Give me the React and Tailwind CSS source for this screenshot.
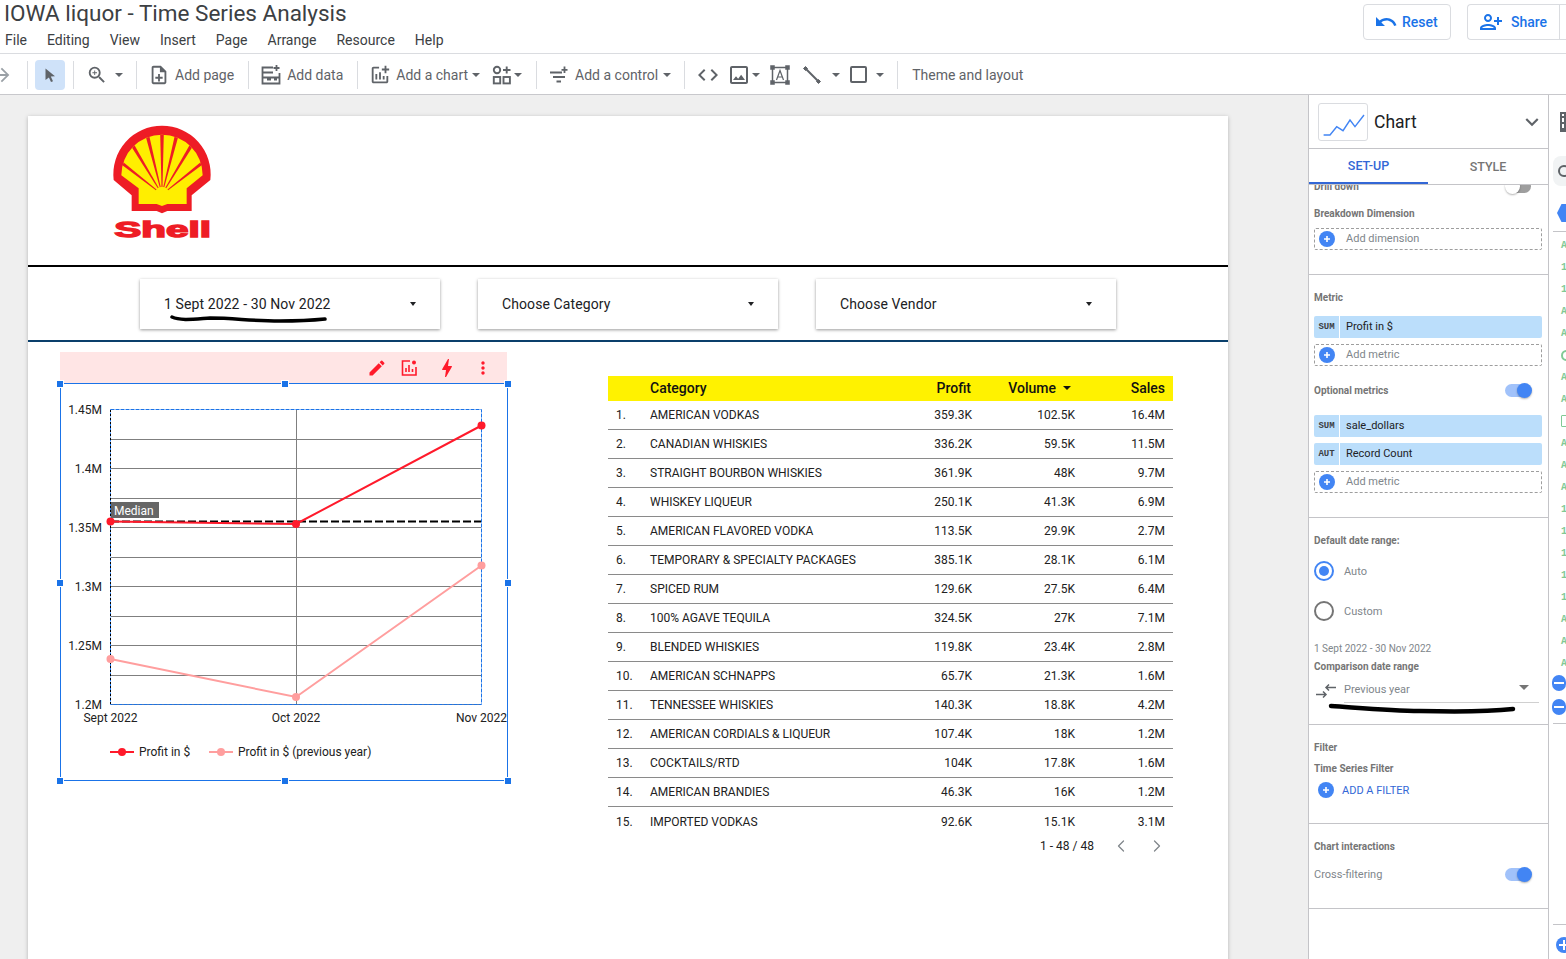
import { MdEdit, MdBolt, MdMoreVert, MdUndo, MdOutlinePersonAddAlt1, MdKeyboardArrowDown, MdZoomIn, MdOutlineNoteAdd, MdOutlineAddchart, MdOutlineImage, MdCode, MdArrowForward } from 'react-icons/md'
import { ChevronLeft, ChevronRight } from 'lucide-react'

const menus = ['File', 'Editing', 'View', 'Insert', 'Page', 'Arrange', 'Resource', 'Help']

const rows = [
  ['AMERICAN VODKAS', '359.3K', '102.5K', '16.4M'],
  ['CANADIAN WHISKIES', '336.2K', '59.5K', '11.5M'],
  ['STRAIGHT BOURBON WHISKIES', '361.9K', '48K', '9.7M'],
  ['WHISKEY LIQUEUR', '250.1K', '41.3K', '6.9M'],
  ['AMERICAN FLAVORED VODKA', '113.5K', '29.9K', '2.7M'],
  ['TEMPORARY & SPECIALTY PACKAGES', '385.1K', '28.1K', '6.1M'],
  ['SPICED RUM', '129.6K', '27.5K', '6.4M'],
  ['100% AGAVE TEQUILA', '324.5K', '27K', '7.1M'],
  ['BLENDED WHISKIES', '119.8K', '23.4K', '2.8M'],
  ['AMERICAN SCHNAPPS', '65.7K', '21.3K', '1.6M'],
  ['TENNESSEE WHISKIES', '140.3K', '18.8K', '4.2M'],
  ['AMERICAN CORDIALS & LIQUEUR', '107.4K', '18K', '1.2M'],
  ['COCKTAILS/RTD', '104K', '17.8K', '1.6M'],
  ['AMERICAN BRANDIES', '46.3K', '16K', '1.2M'],
  ['IMPORTED VODKAS', '92.6K', '15.1K', '3.1M'],
]

const fieldTypes = ['ABC', '123', '123', 'ABC', 'ABC', 'geo', 'ABC', 'ABC', 'cal', 'ABC', 'ABC', 'ABC', '123', '123', '123', '123', '123', 'ABC', 'ABC', 'ABC']

function Caret({ className = '' }) {
  return <span className={`block h-0 w-0 border-x-[4px] border-t-[4px] border-x-transparent border-t-[#5f6368] ${className}`} />
}

function Divider({ className = '' }) {
  return <span className={`block h-[28px] w-px bg-[#dadce0] ${className}`} />
}

function Toolbar() {
  return (
    <div className="flex h-[41px] items-center border-b border-[#c8c8cc] pt-[1px] text-sm text-[#5f6368]">
      <MdArrowForward className="-ml-[9px] text-[#9aa0a6]" size={22} />
      <Divider className="ml-[14px]" />
      <span className="ml-[7px] flex h-[30px] w-[30px] items-center justify-center rounded-sm bg-[#cfe2f9]">
        <svg width="16" height="16" viewBox="0 0 16 16"><path d="M3.5 1.5 L13 9.2 L8.8 9.6 L11 14.2 L9 15 L6.9 10.4 L3.5 13 Z" fill="#5f6368" /></svg>
      </span>
      <Divider className="ml-[8px]" />
      <MdZoomIn className="ml-[12px]" size={22} />
      <Caret className="ml-[7px]" />
      <Divider className="ml-[13px]" />
      <MdOutlineNoteAdd className="ml-[11px]" size={22} />
      <span className="ml-[5px]">Add page</span>
      <Divider className="ml-[14px]" />
      <svg className="ml-[11px]" width="22" height="22" viewBox="0 0 22 22" fill="none" stroke="#5f6368" strokeWidth="1.8">
        <path d="M13 3.5H2.5V19.5H19.5V9M2.5 8.5H13M2.5 13.5H19.5M7 15.5H11M14 15.5H17M16.5 1V7M13.5 4H19.5" />
      </svg>
      <span className="ml-[5px]">Add data</span>
      <Divider className="ml-[14px]" />
      <MdOutlineAddchart className="ml-[11px]" size={22} />
      <span className="ml-[5px]">Add a chart</span>
      <Caret className="ml-[4px]" />
      <svg className="ml-[12px]" width="20" height="20" viewBox="0 0 20 20" fill="none" stroke="#5f6368" strokeWidth="1.9">
        <circle cx="5" cy="5" r="3.2" />
        <rect x="1.8" y="12" width="6.4" height="6.4" />
        <rect x="11.5" y="12" width="6.4" height="6.4" />
        <path d="M14.7 1.5V8.5M11 5H18.5" />
      </svg>
      <Caret className="ml-[2px]" />
      <Divider className="ml-[14px]" />
      <svg className="ml-[12px]" width="20" height="20" viewBox="0 0 20 20" fill="none" stroke="#5f6368" strokeWidth="1.8">
        <path d="M1 7.5H13M4 12H16M7.5 16.5H12M15.5 1.5V8M12.5 4.8H18.5" />
      </svg>
      <span className="ml-[6px]">Add a control</span>
      <Caret className="ml-[5px]" />
      <Divider className="ml-[13px]" />
      <MdCode className="ml-[11px]" size={24} />
      <MdOutlineImage className="ml-[7px]" size={24} />
      <Caret className="ml-[1px]" />
      <svg className="ml-[10px]" width="20" height="20" viewBox="0 0 20 20" fill="none" stroke="#5f6368" strokeWidth="1.5">
        <rect x="2.5" y="2.5" width="15" height="15" />
        <path d="M0.5 0.5h4v4h-4zM15.5 0.5h4v4h-4zM0.5 15.5h4v4h-4zM15.5 15.5h4v4h-4z" fill="#5f6368" strokeWidth="0.5" />
        <path d="M6.5 15L10 5.5L13.5 15M7.8 12H12.2" strokeWidth="1.2" />
      </svg>
      <svg className="ml-[12px]" width="20" height="20" viewBox="0 0 20 20" fill="none" stroke="#5f6368">
        <path d="M3 3L17 17" strokeWidth="2" />
        <path d="M1.5 3.5L3.5 1.5L5.5 3.5L3.5 5.5ZM14.5 16.5L16.5 14.5L18.5 16.5L16.5 18.5Z" fill="#5f6368" strokeWidth="1" />
      </svg>
      <Caret className="ml-[10px]" />
      <span className="ml-[10px] block h-[17px] w-[17px] rounded-[2px] border-2 border-[#5f6368]" />
      <Caret className="ml-[9px]" />
      <Divider className="ml-[13px]" />
      <span className="ml-[14px]">Theme and layout</span>
    </div>
  )
}

function Header() {
  return (
    <div className="flex h-[54px] justify-between border-b border-[#dadce0]">
      <div className="pl-[4px]">
        <div className="h-[26px] text-[22.5px] leading-[26px] text-[#3c4043]">IOWA liquor - Time Series Analysis</div>
        <div className="mt-[5px] flex gap-[20px] pl-[1px] text-sm leading-[18px] text-[#3c4043]">
          {menus.map((m) => <span key={m}>{m}</span>)}
        </div>
      </div>
      <div className="-mr-[11px] mt-[4px] flex h-[36px] text-sm font-medium text-[#1a73e8]">
        <div className="flex w-[88px] items-center rounded border border-[#dadce0] pl-[10px]">
          <MdUndo size={24} />
          <span className="ml-[4px]">Reset</span>
        </div>
        <div className="ml-[16px] flex w-[110px] items-center rounded-l border border-r-0 border-[#dadce0]">
          <div className="flex h-full w-[92px] items-center border-r border-[#dadce0] pl-[11px]">
            <MdOutlinePersonAddAlt1 size={24} />
            <span className="ml-[8px]">Share</span>
          </div>
        </div>
      </div>
    </div>
  )
}

function ShellLogo() {
  const angles = [-52, -31, -14, 0, 14, 31, 52]
  return (
    <svg width="140" height="130" viewBox="0 0 420 390">
      <defs>
        <clipPath id="shell-inner">
          <path d="M94 178A122 122 0 1 1 338 178L290 217V264H232L216 270L200 264H146V217Z" />
        </clipPath>
      </defs>
      <path d="M71 192A146 146 0 1 1 361 192L305 238V285H232L216 292L200 285H125V238Z" fill="#ee1c25" />
      <path d="M94 178A122 122 0 1 1 338 178L290 217V264H232L216 270L200 264H146V217Z" fill="#ffee00" />
      <g clipPath="url(#shell-inner)">
        {angles.map((a) => (
          <polygon key={a} points="214.5,213 217.5,213 222,30 210,30" transform={`rotate(${a} 216 235)`} fill="#ee1c25" />
        ))}
      </g>
      <text x="218" y="364" textAnchor="middle" textLength="290" lengthAdjust="spacingAndGlyphs" fontFamily="'Liberation Sans', sans-serif" fontWeight="700" fontSize="64" fill="#ee1c25" stroke="#ee1c25" strokeWidth="4">Shell</text>
    </svg>
  )
}

function DateControl({ label, className = '' }) {
  return (
    <div className={`flex w-[300px] items-center justify-between bg-white pl-[24px] pr-[24px] text-sm tracking-[0.1px] text-[#202124] shadow-[0_1px_3px_rgba(0,0,0,0.4)] ${className}`}>
      <span>{label}</span>
      <span className="block h-0 w-0 border-x-[3px] border-t-[4px] border-x-transparent border-t-[#202124]" />
    </div>
  )
}

function Handle({ className }) {
  return <span className={`absolute h-[8px] w-[8px] border border-[#fff] bg-[#1a73e8] ${className}`} />
}

function ChartCard() {
  const yLabels = [['1.45M', 409.5], ['1.4M', 468.5], ['1.35M', 527.5], ['1.3M', 586.5], ['1.25M', 645.5], ['1.2M', 704.5]]
  const gridY = [439.5, 468.5, 498.5, 527.5, 557.5, 586.5, 616.5, 645.5, 675.5]
  // offsets: svg origin sits at the page position (60, 384)
  return (
    <div className="w-[448px]">
      <div className="mr-px flex h-[31px] items-center justify-end bg-[#ffe5e5] text-[#ff1a2b]">
        <MdEdit size={20} />
        <svg className="ml-[12px]" width="20" height="20" viewBox="0 0 20 20" fill="none" stroke="#ff1a2b" strokeWidth="1.6">
          <path d="M11 3H3.5V17H17V9" />
          <path d="M7 14V10M10 14V7M13.5 14V11" />
          <circle cx="15" cy="4.5" r="2" fill="#ff1a2b" stroke="none" />
        </svg>
        <MdBolt className="ml-[16px]" size={24} />
        <MdMoreVert className="ml-[14px] mr-[14px]" size={20} />
      </div>
      <div className="relative h-[398px] border border-[#1a73e8]">
        <svg className="absolute -left-px top-0" width="449" height="398" viewBox="60 384 449 398">
          {gridY.map((y) => <line key={y} x1="111" x2="481" y1={y} y2={y} stroke="#7f7f7f" />)}
          <line x1="296.5" x2="296.5" y1="410" y2="704" stroke="#7f7f7f" />
          <line x1="111" x2="481" y1="704.5" y2="704.5" stroke="#7f7f7f" />
          <rect x="110.5" y="409.5" width="371" height="295" fill="none" stroke="#1a73e8" strokeDasharray="4 1" />
          <line x1="110.5" x2="110.5" y1="410" y2="704" stroke="#000" strokeDasharray="2 2" />
          <line x1="111" x2="481" y1="521.5" y2="521.5" stroke="#000" strokeWidth="2" strokeDasharray="8 3" />
          <polyline points="110.5,659 296,697 481.5,565.5" fill="none" stroke="#ff9e9e" strokeWidth="2" />
          <polyline points="110.5,521.5 296,524 481.5,425.5" fill="none" stroke="#ff1a2b" strokeWidth="2" />
          {[[110.5, 659], [296, 697], [481.5, 565.5]].map(([x, y]) => <circle key={x} cx={x} cy={y} r="4" fill="#ff9e9e" />)}
          {[[110.5, 521.5], [296, 524], [481.5, 425.5]].map(([x, y]) => <circle key={x} cx={x} cy={y} r="4" fill="#ff1a2b" />)}
          <rect x="111" y="502" width="48" height="16" fill="#666666" />
          <text x="114" y="514.5" fontSize="12" fill="#fff">Median</text>
          <g fontSize="12" fill="#212121">
            {yLabels.map(([t, y]) => <text key={t} x="102" y={y + 4.5} textAnchor="end">{t}</text>)}
            <text x="110.5" y="722" textAnchor="middle">Sept 2022</text>
            <text x="296" y="722" textAnchor="middle">Oct 2022</text>
            <text x="481.5" y="722" textAnchor="middle">Nov 2022</text>
            <line x1="110" x2="134" y1="752" y2="752" stroke="#ff1a2b" strokeWidth="2" />
            <circle cx="122" cy="752" r="4" fill="#ff1a2b" />
            <text x="139" y="756">Profit in $</text>
            <line x1="209" x2="233" y1="752" y2="752" stroke="#ff9e9e" strokeWidth="2" />
            <circle cx="221" cy="752" r="4" fill="#ff9e9e" />
            <text x="238" y="756">Profit in $ (previous year)</text>
          </g>
        </svg>
        <Handle className="-left-[5px] -top-[4px]" />
        <Handle className="left-[220px] -top-[4px]" />
        <Handle className="-right-[5px] -top-[4px]" />
        <Handle className="-left-[5px] top-[195px]" />
        <Handle className="-right-[5px] top-[195px]" />
        <Handle className="-left-[5px] -bottom-[5px]" />
        <Handle className="left-[220px] -bottom-[5px]" />
        <Handle className="-right-[5px] -bottom-[5px]" />
      </div>
    </div>
  )
}

const tableCols = 'grid grid-cols-[42px_1fr_80px_103px_90px] items-center pr-2'

function DataTable() {
  return (
    <div className="w-[565px] text-xs text-[#212121]">
      <div className={`${tableCols} h-[25px] bg-[#fff200] pb-[2px] text-sm font-medium text-[#111]`}>
        <span />
        <span>Category</span>
        <span className="pr-px text-right">Profit</span>
        <span className="flex items-center justify-end">
          Volume
          <span className="ml-[7px] mr-[4px] block h-0 w-0 border-x-[4px] border-t-[4px] border-x-transparent border-t-[#111]" />
        </span>
        <span className="text-right">Sales</span>
      </div>
      {rows.map((r, i) => (
        <div key={r[0]} className={`${tableCols} h-[29px] ${i < rows.length - 1 ? 'border-b border-[#8a8a8a]' : ''}`}>
          <span className="pl-2">{i + 1}.</span>
          <span>{r[0]}</span>
          <span className="text-right">{r[1]}</span>
          <span className="text-right">{r[2]}</span>
          <span className="text-right">{r[3]}</span>
        </div>
      ))}
      <div className="flex h-[20px] items-center justify-end pr-[6px]">
        <span>1 - 48 / 48</span>
        <ChevronLeft className="ml-[17px] text-[#80868b]" size={20} strokeWidth={1.5} />
        <ChevronRight className="ml-[16px] text-[#80868b]" size={20} strokeWidth={1.5} />
      </div>
    </div>
  )
}

function Label({ children, className = '' }) {
  return <div className={`h-[12px] text-[10px] font-bold leading-[14px] text-[#757575] ${className}`}>{children}</div>
}

function PlusCircle({ className = '' }) {
  return (
    <span className={`flex h-[16px] w-[16px] shrink-0 items-center justify-center rounded-full bg-[#4285f4] ${className}`}>
      <svg width="8" height="8" viewBox="0 0 8 8"><path d="M4 1V7M1 4H7" stroke="#fff" strokeWidth="1.6" /></svg>
    </span>
  )
}

function AddBox({ label, className = '' }) {
  return (
    <div className={`flex h-[22px] items-center rounded-[2px] border border-dashed border-[#9e9e9e] pl-[4px] text-[11px] text-[#80868b] ${className}`}>
      <PlusCircle />
      <span className="ml-[11px]">{label}</span>
    </div>
  )
}

function MetricChip({ agg, label, className = '' }) {
  return (
    <div className={`flex h-[22px] items-center rounded-[2px] bg-[#bbdefb] text-[11px] text-[#202124] ${className}`}>
      <span className="flex h-full w-[26px] items-center justify-center border-r border-white pt-px font-['Liberation_Mono',monospace] text-[9px] font-bold text-[#3c4043]">{agg}</span>
      <span className="ml-[6px]">{label}</span>
    </div>
  )
}

function Toggle({ on = true, className = '' }) {
  if (!on) {
    return (
      <span className={`relative block h-[13px] w-[26px] ${className}`}>
        <span className="absolute bottom-0 right-0 top-0 w-[16px] rounded-r-full bg-[#9e9e9e]" />
        <span className="absolute -top-[1px] left-0 h-[15px] w-[15px] rounded-full bg-white shadow-[0_1px_2px_rgba(0,0,0,0.3)]" />
      </span>
    )
  }
  return (
    <span className={`relative block h-[13px] w-[26px] rounded-full bg-[#a1c2fa] ${className}`}>
      <span className="absolute -top-[1px] left-[12px] h-[15px] w-[15px] rounded-full bg-[#4285f4] shadow-[0_1px_2px_rgba(0,0,0,0.3)]" />
    </span>
  )
}

function Radio({ on, label, className = '' }) {
  return (
    <div className={`flex h-[20px] items-center text-[11px] text-[#80868b] ${className}`}>
      <span className={`flex h-[20px] w-[20px] items-center justify-center rounded-full border-2 ${on ? 'border-[#4285f4]' : 'border-[#757575]'}`}>
        {on && <span className="block h-[10px] w-[10px] rounded-full bg-[#4285f4]" />}
      </span>
      <span className="ml-[10px] mt-[2px]">{label}</span>
    </div>
  )
}

function SidePanel() {
  return (
    <div className="w-[241px] shrink-0 border-x border-[#c4c4c8] bg-white">
      <div className="flex h-[54px] items-center border-b border-[#c4c4c8] pl-[9px] pr-[3px]">
        <div className="h-[38px] w-[50px] rounded-[3px] border border-[#dadce0]">
          <svg width="48" height="36" viewBox="0 0 48 36" fill="none" stroke="#4285f4" strokeWidth="1.4">
            <path d="M4.6 31H11L17.7 22.7L24 26.7L31 16L36 22.7L45 11" />
          </svg>
        </div>
        <span className="ml-[6px] mt-[2px] text-[17.5px] text-[#202124]">Chart</span>
        <MdKeyboardArrowDown className="ml-auto text-[#5f6368]" size={26} />
      </div>
      <div className="flex h-[36px] border-b border-[#c4c4c8] text-[12.5px] font-medium">
        <span className="flex w-[119px] items-center justify-center border-b-2 border-[#3367d6] pt-[2px] text-[#3367d6]">SET-UP</span>
        <span className="flex w-[120px] items-center justify-center pt-px text-[#757575]">STYLE</span>
      </div>
      <div className="h-[773px] overflow-hidden">
        <div className="h-[90px] overflow-hidden border-b border-[#c4c4c8] pl-[5px] pr-[6px]">
          <div className="-mt-[5px] flex h-[12px] items-center justify-between pr-[11px]">
            <span className="text-[10px] font-bold text-[#757575]">Drill down</span>
            <Toggle on={false} />
          </div>
          <Label className="mt-[15px]">Breakdown Dimension</Label>
          <AddBox label="Add dimension" className="mt-[9px]" />
        </div>
        <div className="h-[243px] border-b border-[#c4c4c8] pl-[5px] pr-[6px] pt-[16px]">
          <Label>Metric</Label>
          <MetricChip agg="SUM" label="Profit in $" className="mt-[13px]" />
          <AddBox label="Add metric" className="mt-[6px]" />
          <div className="mt-[18px] flex h-[12px] items-center justify-between pr-[11px]">
            <Label>Optional metrics</Label>
            <Toggle />
          </div>
          <MetricChip agg="SUM" label="sale_dollars" className="mt-[19px]" />
          <MetricChip agg="AUT" label="Record Count" className="mt-[6px]" />
          <AddBox label="Add metric" className="mt-[6px]" />
        </div>
        <div className="h-[207px] border-b border-[#c4c4c8] pl-[5px] pr-[6px] pt-[16px]">
          <Label>Default date range:</Label>
          <Radio on label="Auto" className="mt-[15px]" />
          <Radio label="Custom" className="mt-[20px]" />
          <div className="mt-[21px] h-[12px] text-[10px] leading-[14px] text-[#80868b]">1 Sept 2022 - 30 Nov 2022</div>
          <Label className="mt-[6px]">Comparison date range</Label>
          <div className="mt-[6px] flex h-[25px] items-start">
            <svg className="mt-[6px] shrink-0" width="24" height="14" viewBox="0 0 24 14" fill="none" stroke="#5f6368" strokeWidth="1.5">
              <path d="M2 10.5H12M9 7.5L12 10.5L9 13.5M12 3.5H22M15 0.5L12 3.5L15 6.5" />
            </svg>
            <div className="ml-[6px] flex h-full flex-1 items-center justify-between border-b border-[#d0d0d0] pr-[10px] text-[11px] text-[#80868b]">
              <span>Previous year</span>
              <span className="mb-[6px] block h-0 w-0 border-x-[5px] border-t-[5px] border-x-transparent border-t-[#757575]" />
            </div>
            <span className="w-[3px]" />
          </div>
        </div>
        <div className="h-[99px] border-b border-[#c4c4c8] pl-[5px] pr-[6px] pt-[16px]">
          <Label>Filter</Label>
          <Label className="mt-[9px]">Time Series Filter</Label>
          <div className="mt-[6px] flex h-[20px] items-center pl-[4px] text-[11px] text-[#3367d6]">
            <PlusCircle />
            <span className="ml-[8px] mt-[2px]">ADD A FILTER</span>
          </div>
        </div>
        <div className="h-[85px] border-b border-[#c4c4c8] pl-[5px] pr-[6px] pt-[16px]">
          <Label>Chart interactions</Label>
          <div className="mt-[12px] flex h-[20px] items-center justify-between pr-[11px] text-[11px] text-[#80868b]">
            <span className="mt-[2px]">Cross-filtering</span>
            <Toggle />
          </div>
        </div>
      </div>
    </div>
  )
}

function MinusCircle() {
  return (
    <span className="flex h-[16px] w-[16px] items-center justify-center rounded-full bg-[#4285f4]">
      <span className="block h-[2px] w-[10px] bg-white" />
    </span>
  )
}

function DataPanel() {
  return (
    <div className="relative w-[17px] shrink-0 overflow-hidden bg-white">
      <div className="flex h-[54px] items-center pl-[11px]">
        <span className="block h-[20px] w-[20px] border-2 border-[#5f6368] bg-[repeating-linear-gradient(0deg,#5f6368_0,#5f6368_2px,transparent_2px,transparent_6px)]" />
      </div>
      <div className="ml-[4px] mt-[7px] flex h-[30px] w-[40px] items-center rounded-l-lg bg-[#f1f3f4] pl-[5px]">
        <span className="block h-[12px] w-[12px] rounded-full border-2 border-[#5f6368]" />
      </div>
      <div className="ml-[8px] mt-[18px] h-[18px] w-[18px] bg-[#4285f4] [clip-path:polygon(25%_0,100%_0,100%_100%,25%_100%,0_50%)]" />
      <div className="ml-[4px] mt-[9px] border-t border-[#c4c4c8] pt-[2px]">
        {fieldTypes.map((t, i) => (
          <div key={i} className="flex h-[22px] items-center pl-[8px] font-['Liberation_Mono',monospace] text-[10px] font-bold text-[#81c995]">
            {t === 'geo' && <span className="block h-[11px] w-[11px] shrink-0 rounded-full border-2 border-[#81c995]" />}
            {t === 'cal' && <span className="block h-[12px] w-[10px] shrink-0 rounded-[1px] border border-[#81c995]" />}
            {t !== 'geo' && t !== 'cal' && <span>{t}</span>}
          </div>
        ))}
      </div>
      <div className="ml-[3px] -mt-[3px] flex h-[24px] items-center"><MinusCircle /></div>
      <div className="ml-[3px] flex h-[24px] items-center"><MinusCircle /></div>
      <div className="ml-[4px] mt-[4px] h-[202px] border-b border-t border-[#c4c4c8]" />
      <div className="ml-[7px] mt-[12px] flex h-[16px] w-[16px] items-center justify-center rounded-full bg-[#4285f4]">
        <svg width="12" height="12" viewBox="0 0 12 12"><path d="M6 1V11M1 6H11" stroke="#fff" strokeWidth="2" /></svg>
      </div>
    </div>
  )
}

export default function App() {
  return (
    <div className="relative flex h-[959px] w-[1566px] flex-col overflow-hidden bg-white font-[Roboto,sans-serif]">
      <Header />
      <Toolbar />
      <div className="flex min-h-0 flex-1">
        <div className="min-w-0 flex-1 bg-[#efefef] pl-[28px] pt-[21px]">
          <div className="h-[860px] w-[1200px] bg-white shadow-[0_1px_4px_rgba(0,0,0,0.25)]">
            <div className="h-[151px] border-b-2 border-black pl-[62px]">
              <ShellLogo />
            </div>
            <div className="flex h-[75px] gap-[38px] border-b-2 border-[#0a3f6b] pl-[112px] pt-[12px]">
              <DateControl label="1 Sept 2022 - 30 Nov 2022" className="h-[50px]" />
              <DateControl label="Choose Category" className="h-[50px]" />
              <DateControl label="Choose Vendor" className="h-[50px]" />
            </div>
            <div className="flex pl-[32px] pt-[10px]">
              <ChartCard />
              <div className="ml-[100px] pt-[24px]">
                <DataTable />
              </div>
            </div>
          </div>
        </div>
        <SidePanel />
        <DataPanel />
      </div>
      <svg className="pointer-events-none absolute left-0 top-0" width="1566" height="959" fill="none" stroke="#000" strokeLinecap="round">
        <path d="M172 317C180 321 195 319 210 318C235 318 250 321 280 321C300 321 315 320 325 319" strokeWidth="3.5" />
        <path d="M1331 706C1360 708 1390 711 1420 711C1460 712 1495 711 1513 709" strokeWidth="4.5" />
      </svg>
    </div>
  )
}
